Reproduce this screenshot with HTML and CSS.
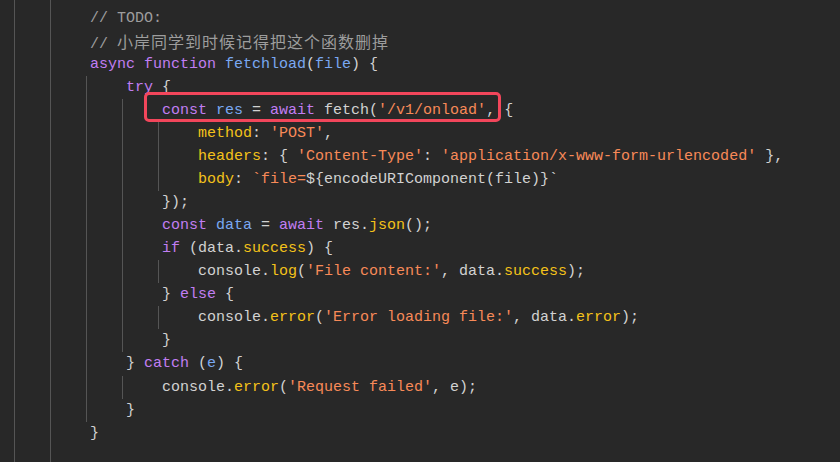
FILE: index.html
```html
<!DOCTYPE html>
<html lang="zh-CN">
<head>
<meta charset="utf-8">
<title>fetchload</title>
<link rel="stylesheet" href="styles.css">
</head>
<body>
<div class="editor">
  <div class="line partial"><i class="ind"></i><i class="ind"></i></div>
  <div class="line"><i class="ind"></i><i class="ind"></i><span class="code"><span class="cm">// TODO:</span></span></div>
  <div class="line"><i class="ind"></i><i class="ind"></i><span class="code"><span class="cm">// <span class="cjk">小岸同学到时候记得把这个函数删掉</span></span></span></div>
  <div class="line"><i class="ind"></i><i class="ind"></i><span class="code"><span class="kw">async</span> <span class="kw">function</span> <span class="fn">fetchload</span>(<span class="fn">file</span>) {</span></div>
  <div class="line"><i class="ind"></i><i class="ind"></i><i class="ind"></i><span class="code"><span class="kw">try</span> {</span></div>
  <div class="line"><i class="ind"></i><i class="ind"></i><i class="ind"></i><i class="ind"></i><span class="code"><span class="kw">const</span> <span class="fn">res</span> = <span class="kw">await</span> fetch(<span class="st">'/v1/onload'</span>, {</span><span class="mark"></span></div>
  <div class="line"><i class="ind"></i><i class="ind"></i><i class="ind"></i><i class="ind"></i><i class="ind"></i><span class="code"><span class="pr">method</span>: <span class="st">'POST'</span>,</span></div>
  <div class="line"><i class="ind"></i><i class="ind"></i><i class="ind"></i><i class="ind"></i><i class="ind"></i><span class="code"><span class="pr">headers</span>: { <span class="st">'Content-Type'</span>: <span class="st">'application/x-www-form-urlencoded'</span> },</span></div>
  <div class="line"><i class="ind"></i><i class="ind"></i><i class="ind"></i><i class="ind"></i><i class="ind"></i><span class="code"><span class="pr">body</span>: <span class="st">`file=</span>${encodeURIComponent(file)}`</span></div>
  <div class="line"><i class="ind"></i><i class="ind"></i><i class="ind"></i><i class="ind"></i><span class="code">});</span></div>
  <div class="line"><i class="ind"></i><i class="ind"></i><i class="ind"></i><i class="ind"></i><span class="code"><span class="kw">const</span> <span class="fn">data</span> = <span class="kw">await</span> res.<span class="pr">json</span>();</span></div>
  <div class="line"><i class="ind"></i><i class="ind"></i><i class="ind"></i><i class="ind"></i><span class="code"><span class="kw">if</span> (data.<span class="pr">success</span>) {</span></div>
  <div class="line"><i class="ind"></i><i class="ind"></i><i class="ind"></i><i class="ind"></i><i class="ind"></i><span class="code">console.<span class="pr">log</span>(<span class="st">'File content:'</span>, data.<span class="pr">success</span>);</span></div>
  <div class="line"><i class="ind"></i><i class="ind"></i><i class="ind"></i><i class="ind"></i><span class="code">} <span class="kw">else</span> {</span></div>
  <div class="line"><i class="ind"></i><i class="ind"></i><i class="ind"></i><i class="ind"></i><i class="ind"></i><span class="code">console.<span class="pr">error</span>(<span class="st">'Error loading file:'</span>, data.<span class="pr">error</span>);</span></div>
  <div class="line"><i class="ind"></i><i class="ind"></i><i class="ind"></i><i class="ind"></i><span class="code">}</span></div>
  <div class="line"><i class="ind"></i><i class="ind"></i><i class="ind"></i><span class="code">} <span class="kw">catch</span> (<span class="fn">e</span>) {</span></div>
  <div class="line"><i class="ind"></i><i class="ind"></i><i class="ind"></i><i class="ind"></i><span class="code">console.<span class="pr">error</span>(<span class="st">'Request failed'</span>, e);</span></div>
  <div class="line"><i class="ind"></i><i class="ind"></i><i class="ind"></i><span class="code">}</span></div>
  <div class="line"><i class="ind"></i><i class="ind"></i><span class="code">}</span></div>
  <div class="line"><i class="ind"></i><i class="ind"></i></div>
</div>
</body>
</html>
```
FILE: styles.css
```css
html, body {
  margin: 0;
  padding: 0;
  background: #282828;
}
.editor {
  height: 462px;
  overflow: hidden;
  padding: 0 0 0 14px;
  box-sizing: border-box;
  font-family: "Liberation Mono", "DejaVu Sans Mono", monospace;
  font-size: 15px;
  color: #d2d2d2;
}
.line {
  position: relative;
  display: flex;
  height: 23.07px;
  line-height: 23.07px;
  white-space: pre;
}
.line.partial {
  height: 6.5px;
}
.ind {
  flex: 0 0 36px;
  box-sizing: border-box;
  border-left: 1px solid #555555;
}
.code {
  padding-left: 4px;
}
.cm { color: #9d9d9d; }
.kw { color: #c17ef3; }
.fn { color: #7aa8f2; }
.st { color: #f88a58; }
.pr { color: #f4c21a; }
.cjk {
  font-family: "Noto Sans CJK SC", sans-serif;
  font-size: 16px;
  letter-spacing: 1px;
}
.mark {
  position: absolute;
  left: 130px;
  top: -7px;
  width: 357px;
  height: 30px;
  box-sizing: border-box;
  border: 3px solid #f2465b;
  border-radius: 5px;
}
```
